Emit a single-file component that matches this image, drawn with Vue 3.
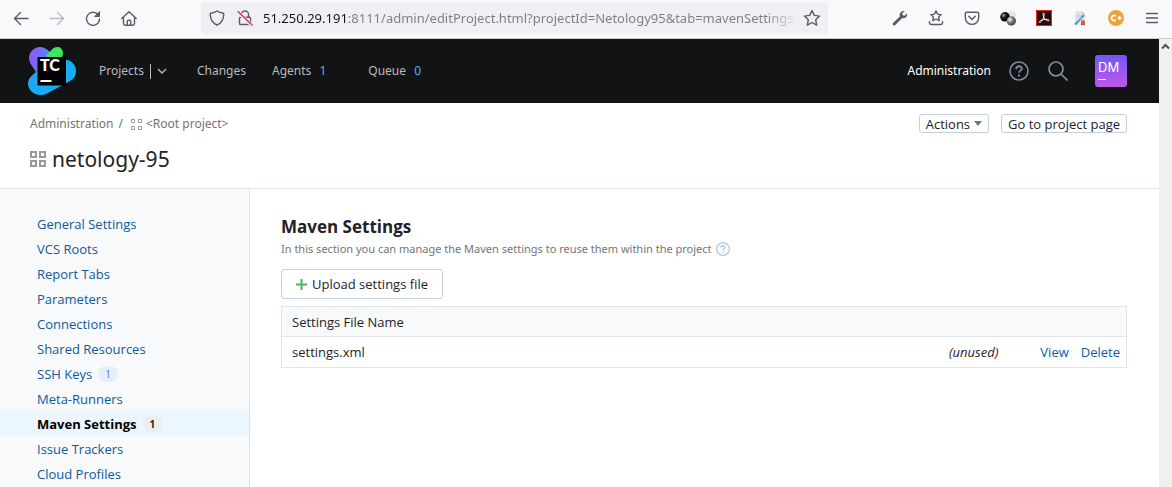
<script setup>
import { ref } from 'vue'

const url = ref('51.250.29.191:8111/admin/editProject.html?projectId=Netology95&tab=mavenSettings')

const navItems = [
  { label: 'General Settings' },
  { label: 'VCS Roots' },
  { label: 'Report Tabs' },
  { label: 'Parameters' },
  { label: 'Connections' },
  { label: 'Shared Resources' },
  { label: 'SSH Keys', count: 1 },
  { label: 'Meta-Runners' },
  { label: 'Maven Settings', count: 1, active: true },
  { label: 'Issue Trackers' },
  { label: 'Cloud Profiles' },
]

const files = [{ name: 'settings.xml', usage: '(unused)' }]
</script>

<template>
  <div class="window">
    <div class="toolbar">
      <div class="tools">
        <button class="tool" aria-label="Back">
          <svg width="16" height="16" viewBox="0 0 16 16" class="line"><path d="M15 8.500H1.500M7.500 2.500l-6 6 6 6" /></svg>
        </button>
        <button class="tool faded" aria-label="Forward">
          <svg width="16" height="16" viewBox="0 0 16 16" class="line"><path d="M1 8.500h13.500M8.500 2.500l6 6-6 6" /></svg>
        </button>
        <button class="tool" aria-label="Reload">
          <svg width="16" height="16" viewBox="0 0 16 16" class="line"><path d="M13.600 5.500A6.500 6.500 0 1 0 14.500 9" /><path d="M14.500 2v4.500H10z" fill="#5b5b66" stroke-width="1" /></svg>
        </button>
        <button class="tool" aria-label="Home">
          <svg width="16" height="16" viewBox="0 0 16 16" class="line"><path d="M.8 8.500L8 1.700l7.200 6.800M2.500 7.300v6.200q0 1.700 1.700 1.700h7.600q1.700 0 1.700-1.700V7.300M6.300 15v-3.800q0-1 1-1h1.400q1 0 1 1V15" /></svg>
        </button>
      </div>
      <div class="address">
        <button class="mini" aria-label="Tracking protection">
          <svg width="16" height="16" viewBox="0 0 16 16" class="line"><path d="M8 1c2 1.300 4 1.900 6.200 2.200q.6.100.6.700C14.700 9.500 12.500 13 8 15 3.500 13 1.300 9.500 1.200 3.900q0-.6.6-.7C4 2.900 6 2.300 8 1z" /></svg>
        </button>
        <button class="mini" aria-label="Connection not secure">
          <svg width="16" height="16" viewBox="0 0 16 16" class="line"><path d="M4.500 7V4.500a3.500 3.500 0 0 1 7 0V7M3.500 7.200h9q1 0 1 1v5.300q0 1-1 1h-9q-1 0-1-1V8.200q0-1 1-1z" /><path d="M1 2l14 13.500" stroke="#f0f0f4" stroke-width="3.500" /><path d="M1 1.500l14 13.500" stroke="#e22850" /></svg>
        </button>
        <input v-model="url" class="url" type="text" aria-label="Address" spellcheck="false" />
        <button class="mini" aria-label="Bookmark this page">
          <svg width="18" height="18" viewBox="0 0 18 18" class="line"><path d="M9 1.500l2.300 4.900 5.200.7-3.800 3.700 1 5.300L9 13.500l-4.700 2.600 1-5.300L1.500 7.100l5.200-.7z" /></svg>
        </button>
      </div>
      <div class="tools">
        <button class="tool" aria-label="Developer tools">
          <svg width="16" height="16" viewBox="0 0 16 16"><path d="M2.200 14L9.300 7" stroke="#5b5b66" stroke-width="3" stroke-linecap="round" /><path d="M12.700 1L10.300 3.500l.4 1.800 1.800.4L15 3.300c.5 2.200-.6 4.700-3.300 5-2.700.2-4.400-1.500-4.100-4C8 2 10.300.5 12.700 1z" fill="#5b5b66" /></svg>
        </button>
        <button class="tool" aria-label="Bookmarks">
          <svg width="16" height="16" viewBox="0 0 16 16" class="line"><path d="M8 .8l1.600 3.300 3.500.5-2.500 2.500.6 3.600L8 9l-3.200 1.700.6-3.600-2.500-2.500 3.500-.5zM1.500 11.800v.7q0 2 2 2h9q2 0 2-2v-.7" /></svg>
        </button>
        <button class="tool" aria-label="Save to Pocket">
          <svg width="16" height="16" viewBox="0 0 16 16" class="line"><path d="M2.800 2.300h10.400q1.500 0 1.500 1.500v3.900a6.700 6.700 0 0 1-13.400 0V3.800q0-1.500 1.500-1.500z" /><path d="M4.700 6.300L8 9.500l3.300-3.200" /></svg>
        </button>
        <button class="tool" aria-label="Spheres extension">
          <svg width="16" height="16" viewBox="0 0 16 16">
            <defs>
              <radialGradient id="dark" cx=".35" cy=".35"><stop offset="0" stop-color="#aaa" /><stop offset=".5" stop-color="#222" /><stop offset="1" stop-color="#000" /></radialGradient>
              <radialGradient id="grey" cx=".35" cy=".35"><stop offset="0" stop-color="#fff" /><stop offset=".5" stop-color="#999" /><stop offset="1" stop-color="#555" /></radialGradient>
            </defs>
            <circle cx="12" cy="5" r="4" fill="#e4e4e8" /><circle cx="5" cy="6.800" r="4.800" fill="url(#dark)" /><circle cx="11.300" cy="11" r="4.700" fill="url(#grey)" />
          </svg>
        </button>
        <button class="tool" aria-label="PDF extension">
          <svg width="16" height="16" viewBox="0 0 16 16"><rect x=".5" y=".5" width="15" height="15" fill="#2b0a0a" stroke="#e1251b" /><path d="M7.500 3c1.300 0 .8 3-.2 5.200-1 2.300-2.700 4.500-3.800 4.300-1.200-.5 1.200-2.500 4.500-3 3.200-.5 5 .1 5 .9-.2 1-2.700.3-4-1.200C7.300 7.300 6.300 3.300 7.500 3z" fill="none" stroke="#fff" stroke-width=".9" /></svg>
        </button>
        <button class="tool" aria-label="Signature extension">
          <svg width="16" height="16" viewBox="0 0 16 16"><path d="M3 1h7l3 3v11H3z" fill="#e3e5e8" /><path d="M10 1v3h3" fill="#c7cbd0" /><path d="M4.500 5h5M4.500 7h5" stroke="#c5c9ce" /><path d="M3 14.500L12 5" stroke="#3f93d8" stroke-width="2" /><path d="M4 12l6-5" stroke="#a5d2f4" /><path d="M9.500 12.500l-.5 3 2-1 2 1-.7-3z" fill="#96301c" /><circle cx="11" cy="12" r="2" fill="#e55a32" /></svg>
        </button>
        <button class="tool" aria-label="C plus extension">
          <svg width="16" height="16" viewBox="0 0 16 16"><circle cx="8" cy="8" r="8" fill="#f0a23a" /><path d="M7.800 6.200a2.500 2.500 0 1 0 0 3.600M9.500 8h4M11.500 6v4" fill="none" stroke="#fff" stroke-width="1.700" /></svg>
        </button>
        <button class="tool" aria-label="Open menu">
          <svg width="16" height="16" viewBox="0 0 16 16" class="line"><path d="M2 3.500h12M2 8h12M2 12.500h12" stroke-linecap="butt" /></svg>
        </button>
      </div>
    </div>

    <div class="viewport">
      <div class="page">
        <header class="header">
          <a href="#" class="logo" aria-label="TeamCity">
            <svg width="48" height="48" viewBox="0 0 48 48">
              <defs>
                <linearGradient id="violet" x1="0" y1=".3" x2="1" y2=".5"><stop offset="0" stop-color="#9b55f5" /><stop offset=".6" stop-color="#4b86f6" /><stop offset="1" stop-color="#21a7f0" /></linearGradient>
                <linearGradient id="sky" x1="0" y1="0" x2="1" y2="1"><stop offset="0" stop-color="#2c9df3" /><stop offset="1" stop-color="#07b6f2" /></linearGradient>
              </defs>
              <path d="M1 11C1 5 6 0 12 0c4 0 7 2 10 5l8 8-18 18-8-12C2 16 1 14 1 11z" fill="url(#violet)" />
              <path d="M18 8.500L24 2.500C27-.5 31-.5 33 1.500c2.500 2.200 2.500 6 .5 9L24 16z" fill="#39e75f" />
              <path d="M9 24l26-11c7-1.500 13 4 13 11 0 5-2.500 8-6 10L19 46.500C15 49 7 48.500 3 44c-4-4.500-4-10.500 0-14.500z" fill="url(#sky)" />
              <rect x="9.500" y="10" width="28.500" height="28.500" fill="#000" />
              <rect x="12.500" y="33" width="11" height="2" fill="#fff" />
              <text x="12" y="24" class="logo-text">TC</text>
            </svg>
          </a>
          <nav class="main-nav" aria-label="Main">
            <div class="projects">
              <a href="#">Projects</a>
              <button class="expand" aria-label="Show projects">
                <svg width="10" height="7" viewBox="0 0 10 7"><path d="M1 1l4 4 4-4" fill="none" stroke="#b8bcc0" stroke-width="1.400" /></svg>
              </button>
            </div>
            <a href="#">Changes</a>
            <a href="#" class="agents">Agents <span class="num idle">1</span></a>
            <a href="#">Queue <span class="num">0</span></a>
          </nav>
          <div class="user-nav">
            <a href="#" class="admin">Administration</a>
            <button class="plain help" aria-label="Help">
              <svg width="20" height="20" viewBox="0 0 20 20" fill="none" stroke="#7f8f9f"><circle cx="10" cy="10" r="9" stroke-width="1.500" /><path d="M7.200 8.200c0-4 5.800-3.700 5.600-.4-.1 1.800-2.800 1.900-2.800 4" stroke-width="1.800" /><path d="M10 13.500v2" stroke-width="2" /></svg>
            </button>
            <button class="plain find" aria-label="Search">
              <svg width="20" height="20" viewBox="0 0 20 20" fill="none" stroke="#7f8f9f" stroke-width="1.700"><circle cx="8" cy="8" r="7" /><path d="M13 13l6.500 6.500" /></svg>
            </button>
            <button class="avatar" aria-label="DM profile"><span>DM</span></button>
          </div>
        </header>

        <section class="title-bar">
          <div>
            <nav class="crumbs" aria-label="Breadcrumbs">
              <a href="#">Administration</a><span class="slash">/</span>
              <svg width="11" height="11" viewBox="0 0 11 11" fill="none" stroke="#999"><path d="M.5.5h3v3h-3zM7.500.5h3v3h-3zM.5 7.500h3v3h-3zM7.500 7.500h3v3h-3z" /></svg>
              <a href="#">&lt;Root project&gt;</a>
            </nav>
            <h1>
              <svg width="16" height="16" viewBox="0 0 16 16" fill="none" stroke="#999" stroke-width="2"><path d="M1 1h5v5H1zM10 1h5v5h-5zM1 10h5v5H1zM10 10h5v5h-5z" /></svg>
              netology-95
            </h1>
          </div>
          <div class="actions">
            <button class="small">Actions <i class="caret"></i></button>
            <a href="#" class="small">Go to project page</a>
          </div>
        </section>

        <div class="body">
          <nav class="side" aria-label="Project settings">
            <ul>
              <li v-for="item in navItems" :key="item.label" :class="{ active: item.active }">
                <a href="#">{{ item.label }}</a>
                <span v-if="item.count" class="badge">{{ item.count }}</span>
              </li>
            </ul>
          </nav>
          <main class="main">
            <h2>Maven Settings</h2>
            <p class="note">
              In this section you can manage the Maven settings to reuse them within the project
              <a href="#" aria-label="Help on Maven settings">
                <svg width="14" height="14" viewBox="0 0 14 14" fill="none" stroke="#a9c9e3"><circle cx="7" cy="7" r="6.400" stroke-width="1.200" /><path d="M5 5.700c0-2.700 4-2.500 3.900-.2C8.800 6.700 7 6.800 7 8.300M7 9.300v1.400" stroke-width="1.300" /></svg>
              </a>
            </p>
            <button class="upload">
              <svg width="11" height="11" viewBox="0 0 11 11"><path d="M5.500 0v11M0 5.500h11" stroke="#43b860" stroke-width="2" /></svg>
              Upload settings file
            </button>
            <table>
              <thead>
                <tr><th colspan="4">Settings File Name</th></tr>
              </thead>
              <tbody>
                <tr v-for="file in files" :key="file.name">
                  <td>{{ file.name }}</td>
                  <td class="usage">{{ file.usage }}</td>
                  <td class="act"><a href="#">View</a></td>
                  <td class="act"><a href="#">Delete</a></td>
                </tr>
              </tbody>
            </table>
          </main>
        </div>
      </div>
      <div class="scrollbar">
        <svg width="9" height="7" viewBox="0 0 9 7"><path d="M1 5.500L4.500 2 8 5.500" fill="none" stroke="#505050" stroke-width="2" /></svg>
      </div>
    </div>
  </div>
</template>

<style>
body {
  background: #fff;
}
</style>

<style scoped>
* {
  box-sizing: border-box;
}
.window {
  display: flex;
  flex-direction: column;
  height: 100vh;
  overflow: hidden;
  font: 13px/20px "Open Sans", "Noto Sans", sans-serif;
  color: #1f2326;
}
a {
  color: inherit;
  text-decoration: none;
}
button {
  font: inherit;
  color: inherit;
  border: 0;
  padding: 0;
  background: none;
}
svg {
  display: block;
  flex: none;
}
.toolbar {
  display: flex;
  align-items: center;
  gap: 54px;
  flex: none;
  height: 39px;
  padding: 0 2px 2px 3px;
  background: #f9f9fb;
  border-bottom: 1px solid #ccc;
}
.tools {
  display: flex;
}
.tool {
  display: grid;
  place-items: center;
  width: 36px;
  height: 32px;
}
.faded {
  opacity: 0.4;
}
.line {
  fill: none;
  stroke: #5b5b66;
  stroke-width: 1.4;
  stroke-linecap: round;
  stroke-linejoin: round;
}
.address {
  display: flex;
  align-items: center;
  flex: 1;
  min-width: 0;
  height: 32px;
  padding: 0 2px;
  border-radius: 4px;
  background: #f0f0f4;
}
.mini {
  display: grid;
  place-items: center;
  flex: none;
  width: 28px;
  height: 28px;
}
.url {
  flex: 1;
  min-width: 0;
  margin: 0 0 0 4px;
  padding: 0;
  border: 0;
  outline: 0;
  font: 13px/24px "Noto Sans", "Open Sans", sans-serif;
  color: transparent;
  background: linear-gradient(to right, #15141a 85px, #7d7c84 85px, #7d7c84 calc(100% - 32px), transparent);
  -webkit-background-clip: text;
  background-clip: text;
}
.viewport {
  display: flex;
  flex: 1;
  min-height: 0;
}
.page {
  display: flex;
  flex-direction: column;
  flex: 1;
  min-width: 0;
}
.scrollbar {
  display: flex;
  justify-content: center;
  flex: none;
  width: 13px;
  padding-top: 4px;
  background: #f0f0f0;
}
.header {
  display: flex;
  align-items: center;
  flex: none;
  height: 64px;
  padding: 0 32px 0 28px;
  background: #121314;
  color: #b8bcc0;
  font-family: "Noto Sans", "Open Sans", sans-serif;
  font-size: 12px;
}
.logo-text {
  font: 900 16px Lato, sans-serif;
  fill: #fff;
}
.main-nav {
  display: flex;
  align-items: center;
  gap: 30px;
  margin-left: 23px;
}
.projects {
  display: flex;
  align-items: center;
  gap: 6px;
}
.expand {
  padding: 4px 0 4px 6px;
  border-left: 1px solid #b8bcc0;
}
.agents {
  margin: 0 12px 0 -4px;
}
.num {
  margin-left: 5px;
  color: #4dacff;
}
.idle {
  color: #7fa3c7;
}
.user-nav {
  display: flex;
  align-items: center;
  margin-left: auto;
  color: #fff;
}
.help {
  margin-left: 18px;
}
.find {
  margin: 0 27px 0 19px;
}
.avatar {
  width: 32px;
  height: 32px;
  padding: 0 0 0 3px;
  border-radius: 3px;
  background: linear-gradient(#7158f8, #c057e8);
  color: #fff;
  font: 13px/18px Inter, sans-serif;
  text-align: left;
}
.avatar span {
  display: block;
}
.avatar::after {
  content: "";
  display: block;
  width: 8px;
  height: 1px;
  margin: 3px 0 5px;
  background: #fff;
}
.title-bar {
  display: flex;
  justify-content: space-between;
  align-items: flex-start;
  flex: none;
  height: 86px;
  padding: 11px 32px 0 30px;
  border-bottom: 1px solid #dfe5eb;
}
.crumbs {
  display: flex;
  align-items: center;
  gap: 4px;
  color: #737577;
  font-family: "Noto Sans", "Open Sans", sans-serif;
  font-size: 12px;
}
.slash {
  margin: 0 4px 0 1px;
}
h1 {
  display: flex;
  align-items: center;
  gap: 6px;
  margin: 10px 0 0;
  font-family: "Noto Sans", "Open Sans", sans-serif;
  font-size: 21px;
  line-height: 30px;
  font-weight: 400;
}
.actions {
  display: flex;
  gap: 12px;
}
.small {
  display: flex;
  align-items: center;
  gap: 4px;
  height: 19px;
  padding: 0 6px;
  border: 1px solid #c3d0db;
  border-radius: 3px;
  background: #fff;
}
.caret {
  border: 4px solid transparent;
  border-top: 5px solid #737577;
  border-bottom: 0;
}
.body {
  display: flex;
  flex: 1;
  min-height: 0;
}
.side {
  flex: none;
  width: 250px;
  padding-top: 22px;
  background: #f7f9fb;
  border-right: 1px solid #dfe5eb;
}
ul {
  margin: 0;
  padding: 0;
  list-style: none;
}
li {
  display: flex;
  align-items: center;
  gap: 6px;
  height: 25px;
  padding-left: 37px;
  color: #0e599d;
}
.active {
  background: #ebf6ff;
  color: #000;
  font-weight: 700;
}
.badge {
  padding: 0 7px;
  border-radius: 8px;
  font-size: 10px;
  line-height: 16px;
  background: #e4eff9;
  color: #2f81c9;
}
.active .badge {
  background: #ededed;
  color: #1f2326;
}
.main {
  flex: 1;
  min-width: 0;
  padding: 26px 32px 0 31px;
}
h2 {
  margin: 0;
  font-size: 17px;
  line-height: 24px;
}
.note {
  display: flex;
  align-items: center;
  gap: 4px;
  margin: 0;
  font-family: "Noto Sans", "Open Sans", sans-serif;
  font-size: 11px;
  line-height: 20px;
  color: #737577;
}
.upload {
  display: flex;
  align-items: center;
  gap: 5px;
  height: 30px;
  margin: 10px 0 7px;
  padding: 0 14px;
  border: 1px solid #c3d0db;
  border-radius: 3px;
  background: #fff;
}
table {
  width: 100%;
  border-collapse: collapse;
  border: 1px solid #dfe5eb;
}
th,
td {
  padding: 5px 10px;
  text-align: left;
  font-weight: 400;
}
th {
  padding-bottom: 4px;
  background: #f7f9fb;
  border-bottom: 1px solid #dfe5eb;
}
.usage {
  width: 80px;
  padding-right: 36px;
  font-style: italic;
}
.act {
  width: 1px;
  padding: 5px 6px;
  color: #0e599d;
}
</style>
